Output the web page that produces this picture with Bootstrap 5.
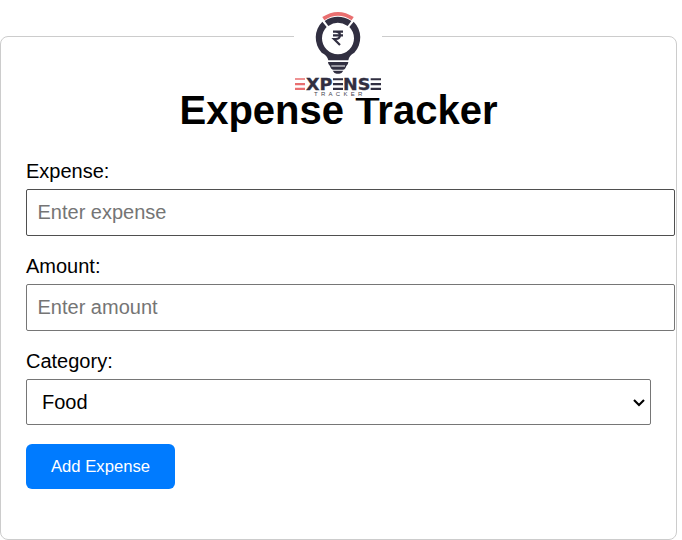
<!DOCTYPE html>
<html lang="en">
<head>
<meta charset="utf-8">
<meta name="viewport" content="width=device-width, initial-scale=1">
<title>Expense Tracker</title>
<link href="https://cdn.jsdelivr.net/npm/bootstrap@5.3.0/dist/css/bootstrap.min.css" rel="stylesheet">
<style>
body{font-family:"Liberation Sans",Arial,sans-serif;font-size:20px;line-height:23px;color:#000;background:#fff;overflow:hidden}
.tracker{width:677px;height:504px;margin-top:36px;padding:50px 25px 0;border:1px solid #ccc;border-radius:8px}
.logo{top:-27px;left:293px;width:88px;height:88px;background:#fff}
.logo svg{display:block}
.title{font-size:40px;line-height:46px;font-weight:700;margin:0 0 27px}
.field{display:block;margin-bottom:6px;line-height:23px}
.entry{display:block;font-size:20px;line-height:23px;height:47px;width:649px;padding:10px 10.5px;border:1px solid #767676;border-radius:2px;color:#000;background:#fff;margin-bottom:19px}
.entry:focus{outline:0}
.entry-first{border-color:#4f4f4f}
.entry::placeholder{color:#757575;opacity:1}
.pick{width:625px;height:46px;border:1px solid #767676;border-radius:2px;padding:10px 15px;font-size:20px;line-height:23px;color:#000;display:block;appearance:none;background:#fff}
.pick-wrap{width:625px;margin-bottom:19px}
.pick-arrow{right:5px;top:19px;pointer-events:none}
.add{width:149px;height:45px;padding:0;border:0;border-radius:6px;background:#007bff;color:#fff;font-size:16.67px}
</style>
<script src="https://cdn.jsdelivr.net/npm/bootstrap@5.3.0/dist/js/bootstrap.bundle.min.js"></script>
</head>
<body>
<main class="tracker position-relative">
  <h1 class="title text-center">Expense Tracker</h1>
  <div class="logo position-absolute">
    <svg width="88" height="88" viewBox="24 12 264 264" role="img" aria-label="Expense Tracker logo">
      <g fill="#312f41">
        <path d="M109 47A67 67 0 0 0 107 140Q124 148 127 163H187Q189 148 205 140A67 67 0 0 0 203 47L190 63A48 48 0 1 1 122 63Z"/>
        <path d="M116 45Q155 20 196 45L185 60Q155 41 127 60Z"/>
        <path d="M126 168H187Q187 176 181 180Q178 191 171 191H142Q135 191 132 180Q126 176 126 168Z"/>
        <path d="M136 180H177" stroke="#fff" stroke-width="3"/>
        <path d="M140 194H172Q167 203 160 203H152Q145 203 140 194Z"/>
        <path d="M141 217h30v6h-30zM141 231h30v7h-30zM141 245h30v7h-30zM254 217h31v6h-31zM254 231h31v7h-31zM254 245h31v7h-31z"/>
        <g font-family="DejaVu Sans, sans-serif" font-weight="700" font-size="50" stroke="#312f41" stroke-width="1">
          <text x="60" y="252.5" textLength="79" lengthAdjust="spacingAndGlyphs">XP</text>
          <text x="171" y="252.5" textLength="82" lengthAdjust="spacingAndGlyphs">NS</text>
        </g>
        <text x="84" y="270" font-family="Liberation Sans, sans-serif" font-size="18" fill="#45434f" textLength="145">TRACKER</text>
        <path d="M141 77H171M141 88H171M141 77H149Q162 77 162 88T149 99H144L162 117" fill="none" stroke="#312f41" stroke-width="6.5"/>
      </g>
      <path d="M112 38Q156 9 200 38" fill="none" stroke="#e96f70" stroke-width="11.5"/>
      <path d="M27 217h30v4h-30zM27 231h30v7h-30zM27 245h30v7h-30z" fill="#e96f70"/>
    </svg>
  </div>
  <form>
    <label class="field" for="expense">Expense:</label>
    <input class="entry entry-first" id="expense" type="text" placeholder="Enter expense">
    <label class="field" for="amount">Amount:</label>
    <input class="entry" id="amount" type="text" placeholder="Enter amount">
    <label class="field" for="category">Category:</label>
    <div class="pick-wrap position-relative">
      <select class="pick" id="category"><option>Food</option></select>
      <svg class="pick-arrow position-absolute" width="14" height="9" viewBox="0 0 14 9"><path d="M2 2L7 7L12 2" fill="none" stroke="#000" stroke-width="2.1"/></svg>
    </div>
    <button class="btn add" type="button">Add Expense</button>
  </form>
</main>
</body>
</html>
